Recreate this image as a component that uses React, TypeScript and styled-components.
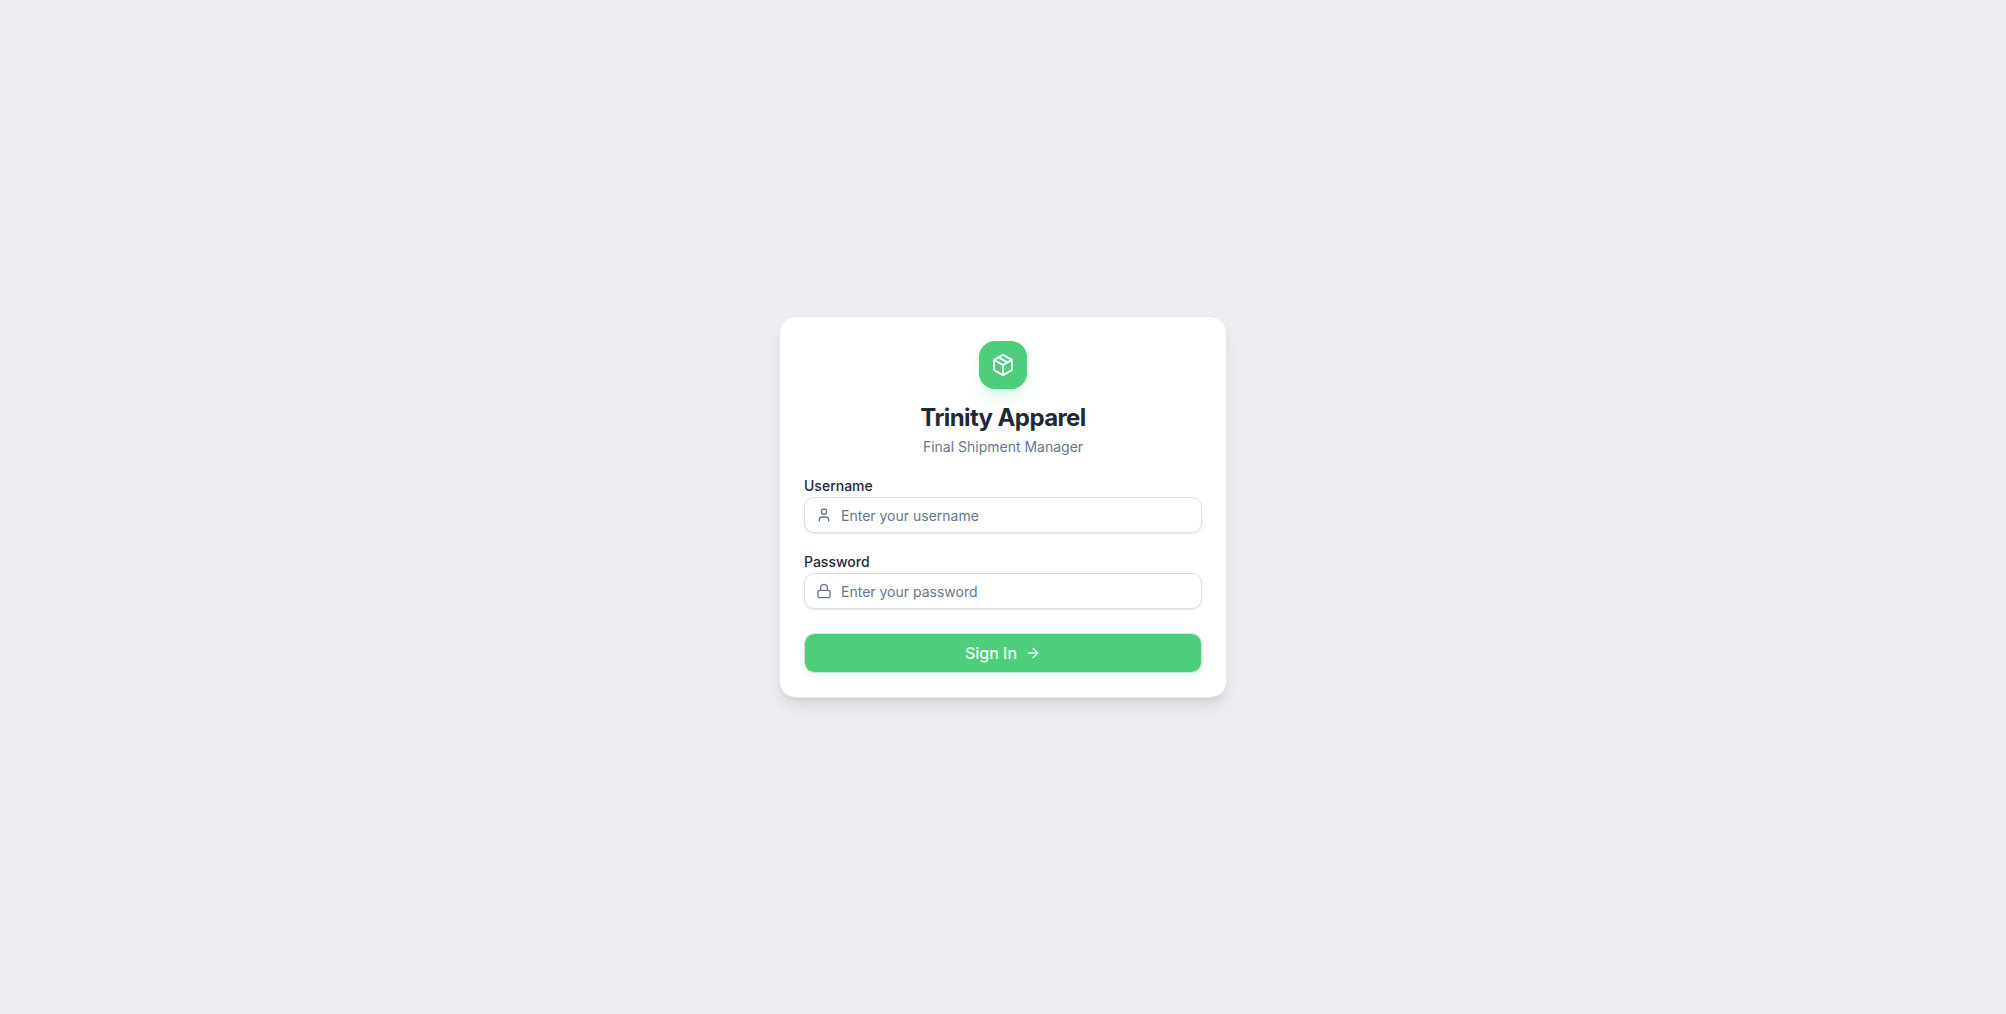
import React from "react";
import styled, { createGlobalStyle } from "styled-components";
import { ArrowRight, Lock, Package, User } from "lucide-react";

const GlobalStyle = createGlobalStyle`
  *, *::before, *::after { box-sizing: border-box; }
  body {
    margin: 0;
    background: #edeef2;
    color: #1e2a35;
    font-family: Inter, "Liberation Sans", sans-serif;
    font-size: 14px;
    line-height: 20px;
  }
`;

const Page = styled.main`
  min-height: 100vh;
  display: flex;
  align-items: center;
  justify-content: center;
  padding: 16px;
`;

const Card = styled.section`
  width: 100%;
  max-width: 448px;
  padding: 24px;
  display: flex;
  flex-direction: column;
  gap: 20px;
  background: #ffffff;
  background-clip: padding-box;
  border: 1px solid #e7e9ee;
  border-radius: 16px;
  box-shadow: 0 10px 15px -3px rgba(0, 0, 0, 0.1), 0 4px 6px -4px rgba(0, 0, 0, 0.1);
`;

const Header = styled.header`
  display: flex;
  flex-direction: column;
  align-items: center;
  text-align: center;
`;

const Logo = styled.div`
  width: 48px;
  height: 48px;
  margin-bottom: 12px;
  display: flex;
  align-items: center;
  justify-content: center;
  color: #ffffff;
  background: #4dce7b;
  border-radius: 16px;
  box-shadow: 0 10px 15px -3px rgba(77, 206, 123, 0.2), 0 4px 6px -4px rgba(77, 206, 123, 0.2);
`;

const Title = styled.h1`
  margin: 0 0 2px;
  font-size: 24px;
  line-height: 34px;
  font-weight: 700;
  letter-spacing: -0.025em;
`;

const Subtitle = styled.p`
  margin: 0;
  color: #68778d;
`;

const Form = styled.form`
  display: flex;
  flex-direction: column;
  gap: 24px;
`;

const Fields = styled.div`
  display: flex;
  flex-direction: column;
  gap: 20px;
`;

const Field = styled.div`
  display: flex;
  flex-direction: column;
  gap: 2px;
`;

const Label = styled.label`
  line-height: 18px;
  font-weight: 500;
`;

const InputShell = styled.div`
  height: 36px;
  padding-left: 11px;
  display: flex;
  align-items: center;
  gap: 9px;
  color: #68778d;
  background: #ffffff;
  border: 1px solid #dcdfe7;
  border-radius: 10px;
  box-shadow: 0 1px 2px rgba(0, 0, 0, 0.1);

  &:focus-within { border-color: #4dce7b; }
  svg { flex: none; }
`;

const Input = styled.input`
  flex: 1;
  min-width: 0;
  height: 100%;
  padding: 0 12px 0 0;
  border: 0;
  outline: 0;
  border-radius: 10px;
  background: transparent;
  color: #1e2a35;
  font: inherit;

  &::placeholder { color: #68778d; opacity: 1; }
`;

const SubmitButton = styled.button`
  height: 40px;
  padding: 0 16px;
  display: flex;
  align-items: center;
  justify-content: center;
  gap: 8px;
  color: #ffffff;
  background: #4dce7b;
  background-clip: padding-box;
  border: 1px solid #dcdfe7;
  border-radius: 10px;
  box-shadow: 0 4px 6px -1px rgba(77, 206, 123, 0.15);
  font: inherit;
  font-size: 16px;
  line-height: 24px;
  font-weight: 500;
  cursor: pointer;
`;

export default function App() {
  return (
    <>
      <GlobalStyle />
      <Page>
        <Card>
          <Header>
            <Logo><Package size={24} aria-hidden /></Logo>
            <Title>Trinity Apparel</Title>
            <Subtitle>Final Shipment Manager</Subtitle>
          </Header>
          <Form onSubmit={(event) => event.preventDefault()}>
            <Fields>
              <Field>
                <Label htmlFor="username">Username</Label>
                <InputShell>
                  <User size={16} aria-hidden />
                  <Input id="username" type="text" placeholder="Enter your username" autoComplete="username" />
                </InputShell>
              </Field>
              <Field>
                <Label htmlFor="password">Password</Label>
                <InputShell>
                  <Lock size={16} aria-hidden />
                  <Input id="password" type="password" placeholder="Enter your password" autoComplete="current-password" />
                </InputShell>
              </Field>
            </Fields>
            <SubmitButton type="submit">
              Sign In
              <ArrowRight size={16} aria-hidden />
            </SubmitButton>
          </Form>
        </Card>
      </Page>
    </>
  );
}
